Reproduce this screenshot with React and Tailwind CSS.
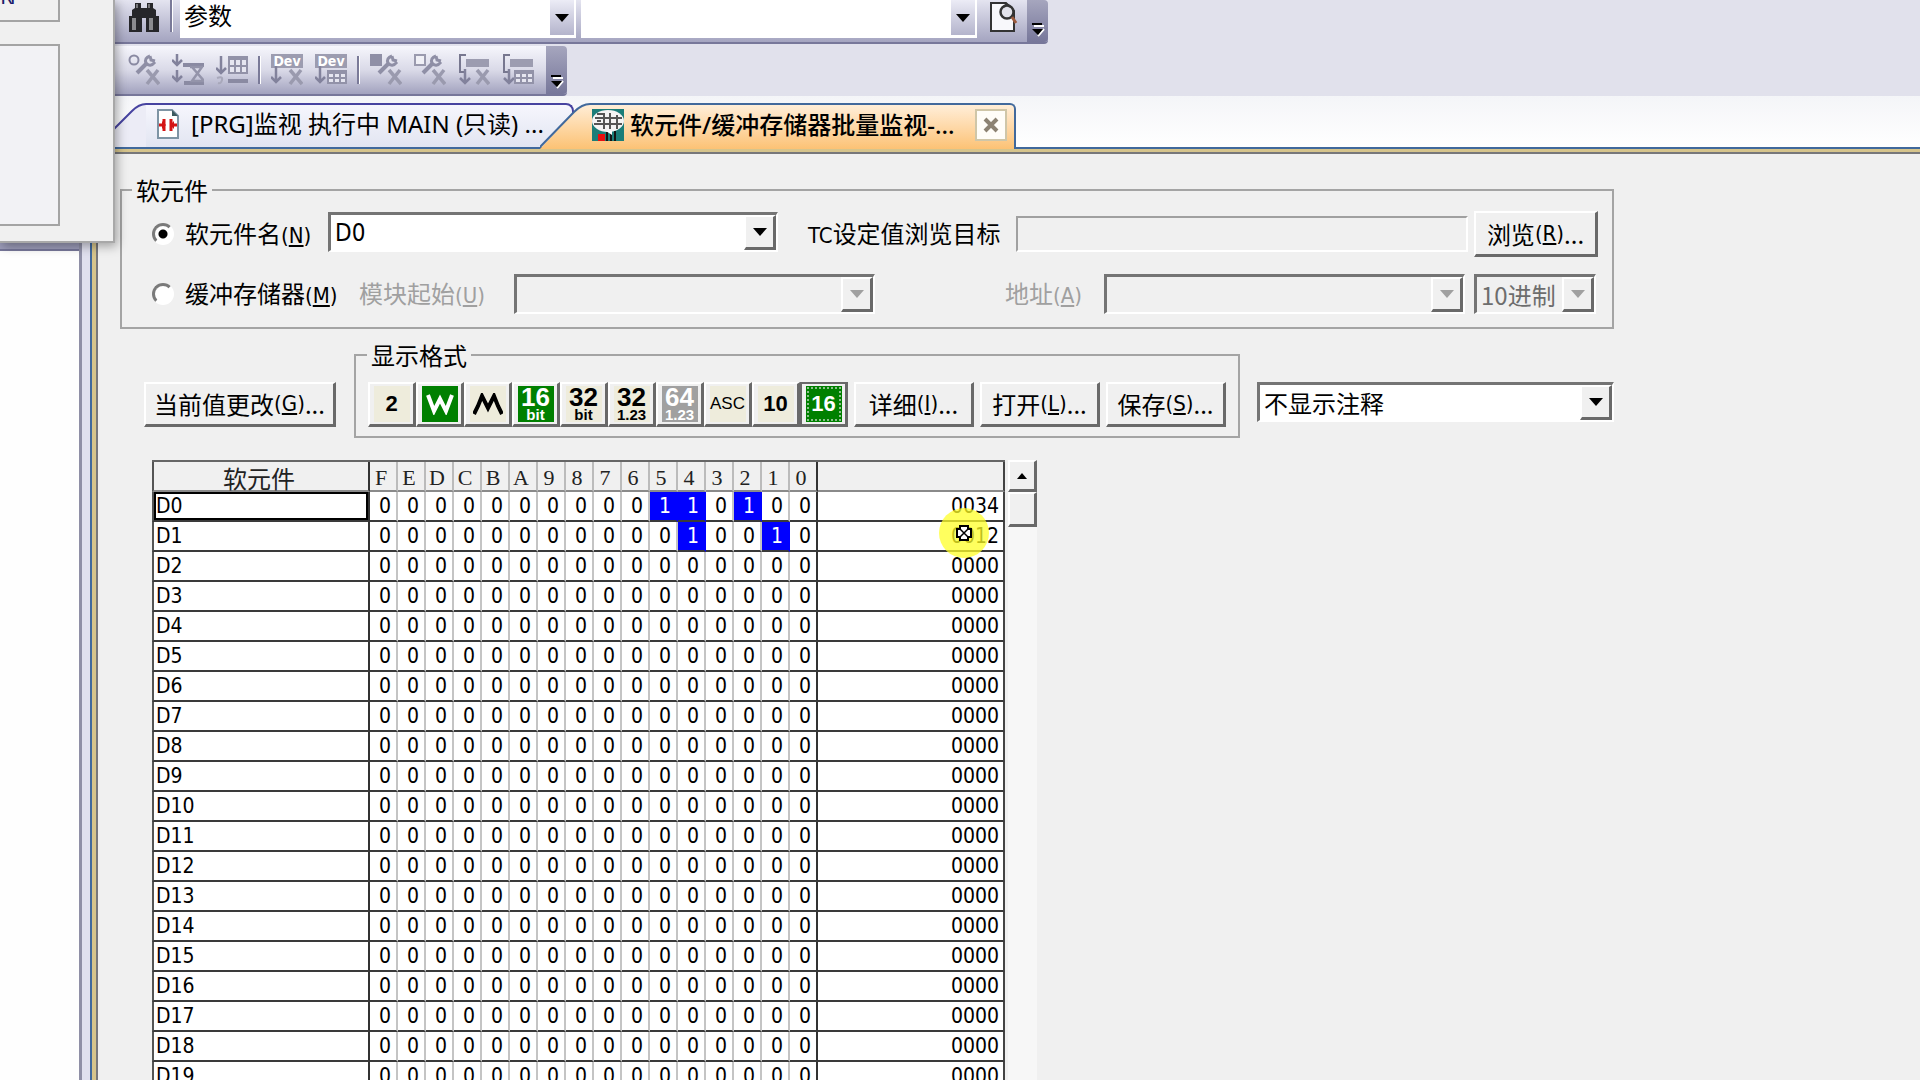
import { useState } from 'react';
import { clsx } from 'clsx';

const BITS = ['F', 'E', 'D', 'C', 'B', 'A', '9', '8', '7', '6', '5', '4', '3', '2', '1', '0'];

// register values, everything not listed is 0
const VALUES = { 0: 0x34, 1: 0x12 };

const ROWS = Array.from({ length: 20 }, (_, i) => {
     const value = VALUES[i] ?? 0;
     return {
          name: `D${i}`,
          bits: value.toString(2).padStart(16, '0').split(''),
          hex: value.toString(16).toUpperCase().padStart(4, '0'),
     };
});

const RAISED = "border-t-2 border-l-2 border-r-3 border-b-3 border-t-white border-l-white border-r-[#696969] border-b-[#696969] bg-[#f0f0f0]";

// Latin part with the underlined access key
function Key({ k }) {
     return <span className="font-['DejaVu_Sans_Condensed','DejaVu_Sans',sans-serif] text-[22px]">(<u className="underline-offset-2">{k}</u>)</span>;
}

function PushButton({ children, className }) {
     return (
          <button type="button" className={clsx("flex items-center justify-center whitespace-nowrap text-[24px] leading-6", RAISED, className)}>
               {children}
          </button>
     );
}

function Combo({ id, label, options, disabled, className }) {
     return (
          <div className={clsx("flex h-10 border-t-3 border-l-3 border-r-2 border-b-2 border-t-[#747474] border-l-[#747474] border-r-white border-b-white", disabled ? "bg-[#f0f0f0]" : "bg-white", className)}>
               <select id={id} aria-label={label} disabled={disabled} className={clsx("min-w-0 flex-1 appearance-none bg-transparent pl-1 text-[24px] leading-8 outline-none", disabled ? "text-[#6d6d6d] opacity-100" : "text-black")}>
                    {options.map((o) => <option key={o}>{o}</option>)}
               </select>
               <div className={clsx("pointer-events-none flex w-8 shrink-0 items-center justify-center", RAISED)}>
                    <svg viewBox="0 0 14 8" className={clsx("h-2 w-[14px]", disabled ? "fill-[#a0a0a0]" : "fill-black")}><path d="M0 0h14L7 8z" /></svg>
               </div>
          </div>
     );
}

function Radio({ id, checked, onChange, children, className }) {
     return (
          <div className={clsx("flex shrink-0 items-center gap-[11px]", className)}>
               <input
                    id={id}
                    type="radio"
                    name="target"
                    checked={checked}
                    onChange={onChange}
                    className="h-[22px] w-[22px] shrink-0 appearance-none rounded-full border-3 border-t-[#7a7a7a] border-l-[#7a7a7a] border-r-white border-b-white bg-white checked:bg-[radial-gradient(circle,#000_4px,#fff_5px)]"
               />
               <label htmlFor={id} className="whitespace-nowrap text-[24px] leading-6">{children}</label>
          </div>
     );
}

/* ---------- toolbar icons ---------- */

function Wrench({ x = 0 }) {
     return (
          <g transform={`translate(${x} 0)`}>
               <path d="M9 19 L19 9" stroke="#8f8fa6" strokeWidth="4" />
               <path d="M22 2 q-6 2 -4 7 q4 5 9 -1 M22 2 l1 4 l4 1" stroke="#8f8fa6" strokeWidth="3" fill="none" />
          </g>
     );
}

const Cross = () => <path d="M19 16 L31 30 M30 16 L19 30" stroke="#9a9aae" strokeWidth="3.5" />;
const Grid = ({ x, y, w, h }) => (
     <g>
          <rect x={x} y={y} width={w} height={h} fill="#9292a8" />
          {[0, 1, 2].map((c) => [0, 1].map((r) => (
               <rect key={`${c}${r}`} x={x + 2 + (c * (w - 2)) / 3} y={y + 4 + (r * (h - 4)) / 2} width={(w - 2) / 3 - 2} height={(h - 4) / 2 - 2} fill="#e6e6f0" />
          )))}
     </g>
);
const Down = ({ x, y, h }) => <path d={`M${x} ${y}v${h} M${x - 5} ${y + h - 5}l5 5l5 -5`} stroke="#82829c" strokeWidth="2.5" fill="none" />;

const ICONS = {
     circleX: <><circle cx="6" cy="6" r="4.5" fill="none" stroke="#8a8aa2" strokeWidth="2" /><Wrench /><Cross /></>,
     delay: <><Down x={5} y={0} h={11} /><Down x={5} y={16} h={11} /><path d="M11 11h21M12 29h20" stroke="#8a8aa2" strokeWidth="4" /><path d="M18 13h12l-10 14h12l-12-14" fill="none" stroke="#9494aa" strokeWidth="2.5" /></>,
     list: <><Down x={5} y={2} h={17} /><Grid x={12} y={2} w={20} h={18} /><path d="M12 27h20" stroke="#8a8aa2" strokeWidth="4" /><path d="M1 24q6 -2 5 2t-4 3" fill="none" stroke="#a8a8ba" strokeWidth="2" /></>,
     squareX: <><rect width="12" height="12" fill="#8f8fa6" /><Wrench /><Cross /></>,
     boxX: <><rect x="1" y="1" width="10" height="10" fill="#f0f0f6" stroke="#9a9aae" strokeWidth="2" /><Wrench /><Cross /></>,
     jumpX: <><path d="M8 1H2v17h5" fill="none" stroke="#77778f" strokeWidth="2" /><Down x={7} y={15} h={14} /><rect x="8" y="5" width="23" height="8" fill="#9c9cb0" /><Cross /></>,
     jumpGrid: <><path d="M8 1H2v17h5" fill="none" stroke="#77778f" strokeWidth="2" /><Down x={7} y={15} h={14} /><rect x="8" y="5" width="23" height="8" fill="#9c9cb0" /><Grid x={12} y={16} w={20} h={14} /></>,
     devX: <><DevLabel /><Down x={5} y={12} h={16} /><Cross /></>,
     devGrid: <><DevLabel /><Down x={5} y={12} h={16} /><Grid x={12} y={16} w={20} h={14} /></>,
};

function DevLabel() {
     return (
          <g>
               <rect width="32" height="14" fill="#9c9cb0" />
               <text x="16" y="12" textAnchor="middle" fontSize="14" fontWeight="bold" fill="#fff" fontFamily="DejaVu Sans Condensed, DejaVu Sans, sans-serif">Dev</text>
          </g>
     );
}

function ToolIcon({ name, label }) {
     return (
          <button type="button" aria-label={label} className="h-8 w-8 shrink-0">
               <svg viewBox="0 0 32 32" className="h-8 w-8">{ICONS[name]}</svg>
          </button>
     );
}

const Divider = () => <div className="mx-[10px] h-7 w-[3px] shrink-0 border-r border-r-white bg-[#7a7a98]" />;

function EndCap() {
     return (
          <div className="flex h-full w-[21px] shrink-0 items-end justify-center rounded-r bg-linear-to-b from-[#a6a6be] to-[#77779a] pb-1">
               <svg viewBox="0 0 14 16" className="h-4 w-[14px]"><path d="M3 4h10M7 14l6-7" stroke="#fff" strokeWidth="2" /><path d="M1 1h10v2H1zM1 7h11l-5 6z" /></svg>
          </div>
     );
}

function ToolCombo({ label, options, className }) {
     return (
          <div className={clsx("flex h-[38px] shrink-0 bg-white", className)}>
               <select aria-label={label} className="min-w-0 flex-1 appearance-none bg-transparent pb-2 pl-1 text-[24px] leading-7 outline-none">
                    {options.map((o) => <option key={o}>{o}</option>)}
               </select>
               <div className="pointer-events-none mr-[2px] flex h-[35px] w-6 items-center justify-center bg-linear-to-b from-[#ececf6] to-[#b4b4cc]">
                    <svg viewBox="0 0 14 8" className="h-2 w-[14px]"><path d="M0 0h14L7 8z" /></svg>
               </div>
          </div>
     );
}

function Toolbars() {
     return (
          <div className="h-24 shrink-0 bg-[#e1e1ec]">
               <div className="flex h-11 w-[1048px] items-start rounded-br border-b-2 border-[#77779a] bg-linear-to-b from-[#e4e4f0] to-[#a4a4c0]">
                    <div className="w-[115px] shrink-0" />
                    <button type="button" aria-label="查找" className="mt-px ml-[13px] h-8 w-8 shrink-0">
                         <svg viewBox="0 0 32 32" className="h-8 w-8">
                              <path d="M7 2h6v5h6V2h6v5l3 2v6h3v16H18V17h-4v14H1V15h3V9l3-2z" fill="#26262a" />
                              <path d="M4 17h4v12H4zM21 17h4v12h-4z" fill="#8b8b8f" />
                              <path d="M8 3h2v4H8zM20 3h2v4h-2z" fill="#77777b" />
                         </svg>
                    </button>
                    <div className="ml-[10px] h-8 w-[3px] shrink-0 border-r border-r-white bg-[#7a7a98]" />
                    <ToolCombo label="查找对象" options={['参数']} className="ml-[7px] w-[396px]" />
                    <ToolCombo label="查找字符串" options={['']} className="ml-[5px] w-[396px]" />
                    <button type="button" aria-label="查找预览" className="ml-3 h-8 w-8 shrink-0">
                         <svg viewBox="0 0 32 32" className="h-8 w-8">
                              <path d="M2 3h15l8 8v20H2z" fill="#f8f8fb" stroke="#333" strokeWidth="2" />
                              <circle cx="18" cy="12" r="6.5" fill="#e2e2ea" stroke="#333" strokeWidth="2.5" />
                              <path d="M15 7q3-5 6 0" fill="none" stroke="#333" strokeWidth="2" />
                              <path d="M23 17l4 6" stroke="#9c5a3c" strokeWidth="3" />
                         </svg>
                    </button>
                    <div className="ml-auto h-[42px]"><EndCap /></div>
               </div>
               <div className="mt-[2px] flex h-[50px] w-[567px] items-center rounded-r border-b-2 border-[#77779a] bg-linear-to-b from-[#f6f6fc] via-[#dadae8] to-[#a2a2be]">
                    <div className="ml-32 flex items-center gap-3">
                         <ToolIcon name="circleX" label="软元件测试" />
                         <ToolIcon name="delay" label="扫描延时" />
                         <ToolIcon name="list" label="列表" />
                    </div>
                    <Divider />
                    <div className="flex items-center gap-3">
                         <ToolIcon name="devX" label="取消软元件" />
                         <ToolIcon name="devGrid" label="软元件列表" />
                    </div>
                    <Divider />
                    <div className="mr-auto flex items-center gap-3">
                         <ToolIcon name="squareX" label="停止执行" />
                         <ToolIcon name="boxX" label="解除停止" />
                         <ToolIcon name="jumpX" label="取消跳转" />
                         <ToolIcon name="jumpGrid" label="跳转列表" />
                    </div>
                    <EndCap />
               </div>
          </div>
     );
}

function TabStrip() {
     return (
          <div className="flex h-[53px] items-end border-b-2 border-[#41699c] bg-linear-to-b from-[#f4f5f8] to-white font-['Noto_Sans','Noto_Sans_CJK_SC',sans-serif]">
               <svg viewBox="0 0 50 44" className="ml-[6px] h-11 w-[50px] shrink-0"><path d="M0 44L36 8Q44 1 50 1V44z" fill="#ececf6" /><path d="M0 44L36 8Q43 1 50 1" fill="none" stroke="#4743a0" strokeWidth="2" /></svg>
               <button type="button" className="flex h-11 w-[428px] shrink-0 items-center gap-3 rounded-tr-lg border-t-2 border-r-2 border-[#4743a0] bg-linear-to-b from-[#f6f6fd] to-[#e2e5f1] pb-1 pl-[11px] text-[24px] leading-8 whitespace-nowrap">
                    <svg viewBox="0 0 22 30" className="h-[30px] w-[22px] shrink-0">
                         <path d="M1 1h14l6 6v22H1z" fill="#fff" stroke="#7e94a4" strokeWidth="2" />
                         <path d="M15 1v6h6" fill="#3c5a60" />
                         <path d="M2 16h4M16 16h4M7 10v12M14 10v12" stroke="#d41414" strokeWidth="3" />
                         <path d="M5 12l4 4-4 4zM17 12l-4 4 4 4z" fill="#d41414" />
                    </svg>
                    [PRG]监视 执行中 MAIN (只读) ...
               </button>
               <svg viewBox="0 0 50 46" className="relative -mb-[2px] -ml-[34px] h-[46px] w-[50px] shrink-0"><path d="M0 46L34 9Q43 1 50 1V46z" fill="url(#tabfill)" /><path d="M0 44L34 9Q42 1 50 1" fill="none" stroke="#41699c" strokeWidth="2" /><defs><linearGradient id="tabfill" x2="0" y2="1"><stop stopColor="#ffeed8" /><stop offset="1" stopColor="#fcc274" /></linearGradient></defs></svg>
               <div className="-mb-[2px] flex h-[46px] w-[426px] shrink-0 items-center rounded-tr-md border-t-2 border-r-2 border-[#41699c] bg-linear-to-b from-[#ffeed8] to-[#fcc274] pb-1 pl-[2px]">
                    <button type="button" className="flex items-center gap-[6px] text-[24px] leading-8 font-medium whitespace-nowrap">
                         <svg viewBox="0 0 32 32" className="h-8 w-8">
                              <path d="M0 0h32v32H0z" fill="#1b7d78" />
                              <ellipse cx="16" cy="12" rx="16" ry="11" fill="#f4f4f4" />
                              <path d="M3 9h27M2 15h28M12 5v15M18 4v16M25 6v14M5 5h8M5 12h4" stroke="#555" strokeWidth="2" />
                              <path d="M6 25h7v7H6z" fill="#e81010" />
                              <path d="M15 23v9M19 22v10M23 22v10" stroke="#151515" strokeWidth="2" />
                              <path d="M14 22l6 4v-4z" fill="#fff" />
                         </svg>
                         软元件/缓冲存储器批量监视-...
                    </button>
                    <button type="button" aria-label="关闭" className="mr-[7px] ml-auto flex h-8 w-8 items-center justify-center border-2 border-[#cfc6a8] bg-[#fffdf8]">
                         <svg viewBox="0 0 16 16" className="h-4 w-4"><path d="M2 2l12 12M14 2L2 14" stroke="#8c8272" strokeWidth="4" /></svg>
                    </button>
               </div>
          </div>
     );
}

/* ---------- display format buttons ---------- */

const W = <svg viewBox="0 0 28 22" className="h-[22px] w-7"><path d="M2 2l6 16 6-12 6 12 6-16" fill="none" stroke="#fff" strokeWidth="4" /></svg>;
const M = <svg viewBox="0 0 30 22" className="h-[22px] w-[30px]"><path d="M1 21l4-8 4-10 6 12 6-12 4 10 4 8" fill="none" stroke="#000" strokeWidth="4" /></svg>;

const FORMATS = [
     { id: '2', label: '2进制', big: '2' },
     { id: 'w', label: '字', icon: W, green: true },
     { id: 'm', label: '多点字', icon: M },
     { id: '16b', label: '16位整数', big: '16', small: 'bit', green: true },
     { id: '32b', label: '32位整数', big: '32', small: 'bit' },
     { id: '32f', label: '32位实数', big: '32', small: '1.23' },
     { id: '64f', label: '64位实数', big: '64', small: '1.23', disabled: true },
     { id: 'asc', label: 'ASCII', big: 'ASC', narrow: true },
     { id: '10', label: '10进制', big: '10' },
     { id: '16', label: '16进制', big: '16', green: true, pressed: true },
];

function FormatButton({ f }) {
     return (
          <button
               type="button"
               aria-label={f.label}
               disabled={f.disabled}
               className={clsx("flex h-[45px] w-12 shrink-0 items-center justify-center", RAISED, f.pressed && "outline-2 -outline-offset-2 outline-[#696969]")}
          >
               <span
                    className={clsx(
                         "flex h-9 w-9 flex-col items-center justify-center font-['Liberation_Sans',sans-serif] font-bold",
                         f.disabled ? "bg-[#a0a0a0] text-white" : f.green ? "bg-[#008000] text-white" : "bg-[#eeecdc] text-black",
                         f.pressed && "outline-2 -outline-offset-3 outline-dotted outline-[#8cc08c]"
                    )}
               >
                    {f.icon}
                    {f.big && <span className={clsx(f.narrow ? "text-[17px] leading-6 font-normal" : f.small ? "text-[26px] leading-[22px]" : "text-[22px] leading-6")}>{f.big}</span>}
                    {f.small && <span className="text-[15px] leading-[14px]">{f.small}</span>}
               </span>
          </button>
     );
}

function DeviceTable() {
     return (
          <table className="w-[853px] table-fixed border-separate border-spacing-0 border-t-2 border-[#666] bg-white font-['DejaVu_Sans_Condensed','DejaVu_Sans',sans-serif] text-[21px] leading-6">
               <colgroup>
                    <col className="w-[218px]" />
                    {BITS.map((b) => <col key={b} className="w-7" />)}
                    <col />
               </colgroup>
               <thead>
                    <tr className="h-[30px] bg-[#f0f0f0] text-[#222]">
                         <th scope="col" className="border-r-2 border-b-2 border-l-2 border-r-[#333] border-b-[#8a8a8a] border-l-[#555] p-0 pt-1 pr-1 font-['Noto_Sans_CJK_SC',sans-serif] text-[24px] font-normal">软元件</th>
                         {BITS.map((b, i) => (
                              <th key={b} scope="col" className={clsx("border-r-2 border-b-2 border-b-[#8a8a8a] p-0 pt-1 pr-1 text-center font-['Liberation_Serif',serif] text-[22px] font-normal", i === 15 ? "border-r-[#333]" : "border-r-[#bbb]")}>{b}</th>
                         ))}
                         <th aria-label="值" className="border-r-2 border-b-2 border-r-[#444] border-b-[#8a8a8a] p-0" />
                    </tr>
               </thead>
               <tbody>
                    {ROWS.map((row, r) => (
                         <tr key={row.name} className="h-[30px]">
                              <th scope="row" className="border-r-2 border-b-2 border-l-2 border-r-[#333] border-b-[#3a3a3a] border-l-[#555] p-0 text-left font-normal">
                                   <div className={clsx("flex h-7 items-center", r === 0 ? "border-2 border-black" : "pl-[2px]")}>{row.name}</div>
                              </th>
                              {row.bits.map((bit, i) => (
                                   <td
                                        key={i}
                                        className={clsx(
                                             "border-r-2 border-b-2 border-b-[#3a3a3a] p-0 pl-1 text-center",
                                             bit === '1' ? "border-r-[#0000ff] bg-[#0000ff] text-white" : i === 15 ? "border-r-[#333]" : "border-r-[#c4c4c4]"
                                        )}
                                   >
                                        {bit}
                                   </td>
                              ))}
                              <td className="border-r-2 border-b-2 border-r-[#444] border-b-[#3a3a3a] p-0 pr-1 text-right">
                                   {r === 1 ? <span className="relative">{row.hex}<Pointer /></span> : row.hex}
                              </td>
                         </tr>
                    ))}
               </tbody>
          </table>
     );
}

// highlighted cell cursor
function Pointer() {
     return (
          <svg viewBox="0 0 50 50" className="absolute -top-4 -left-3 h-[50px] w-[50px]">
               <circle cx="25" cy="25" r="25" fill="#ffff28" fillOpacity="0.75" />
               <path d="M21 18h8v3h3v8h-3v3h-8v-3h-3v-8h3z" fill="#fff" stroke="#000" strokeWidth="2" />
               <path d="M21 21l8 8M29 21l-8 8" stroke="#000" strokeWidth="1.5" />
          </svg>
     );
}

function ScrollBar() {
     return (
          <div className="ml-[3px] flex w-[29px] flex-col bg-[#f7f7f7]">
               <button type="button" aria-label="向上滚动" className={clsx("flex h-8 items-center justify-center", RAISED)}>
                    <svg viewBox="0 0 10 6" className="h-[6px] w-[10px]"><path d="M0 6h10L5 0z" /></svg>
               </button>
               <div className={clsx("h-[35px]", RAISED)} />
          </div>
     );
}

function MonitorPanel() {
     const [target, setTarget] = useState('device');

     return (
          <main className="flex-1 pt-6 pr-[306px] pl-[22px]">
               <fieldset className="border-2 border-[#a4a4a4] pb-[13px]">
                    <legend className="ml-[10px] px-1 text-[24px] leading-6">软元件</legend>
                    <div className="mt-[9px] flex h-[46px] items-center pr-[14px] pl-[30px]">
                         <Radio id="device" checked={target === 'device'} onChange={() => setTarget('device')} className="w-44">软元件名<Key k="N" /></Radio>
                         <Combo label="软元件名" options={['D0']} className="mb-1 w-[450px] font-['DejaVu_Sans_Condensed','DejaVu_Sans',sans-serif]" />
                         <label htmlFor="tc" className="ml-[30px] w-[208px] shrink-0 whitespace-nowrap text-[24px] leading-6"><span className="font-['DejaVu_Sans_Condensed','DejaVu_Sans',sans-serif] text-[22px]">TC</span>设定值浏览目标</label>
                         <input id="tc" readOnly className="h-9 min-w-0 flex-1 border-2 border-t-[#a0a0a0] border-r-white border-b-white border-l-[#a0a0a0] bg-[#f0f0f0] px-1 text-[24px] outline-none" />
                         <PushButton className="ml-[6px] h-[46px] w-[124px] shrink-0">浏览<Key k="R" />...</PushButton>
                    </div>
                    <div className="mt-[17px] flex items-center pr-[14px] pl-[30px]">
                         <Radio id="buffer" checked={target === 'buffer'} onChange={() => setTarget('buffer')} className="w-[207px]">缓冲存储器<Key k="M" /></Radio>
                         <label htmlFor="module" className="w-[155px] text-[24px] leading-6 text-[#a0a0a0]">模块起始<Key k="U" /></label>
                         <Combo id="module" disabled options={['']} className="w-[361px]" />
                         <label htmlFor="address" className="ml-auto w-[99px] text-[24px] leading-6 text-[#a0a0a0]">地址<Key k="A" /></label>
                         <Combo id="address" disabled options={['']} className="w-[361px]" />
                         <Combo label="进制" disabled options={['10进制']} className="mr-[2px] ml-[9px] w-[122px]" />
                    </div>
               </fieldset>

               <div className="mt-[14px] flex items-end">
                    <PushButton className="mb-[11px] ml-6 h-[45px] w-48 shrink-0">当前值更改<Key k="G" />...</PushButton>
                    <fieldset className="ml-[18px] border-2 border-[#a4a4a4] pb-[9px]">
                         <legend className="ml-[11px] px-1 text-[24px] leading-6">显示格式</legend>
                         <div className="mt-[15px] flex px-3">
                              {FORMATS.map((f) => <FormatButton key={f.id} f={f} />)}
                              <div className="ml-[6px] flex gap-[6px]">
                                   <PushButton className="h-[45px] w-[120px]">详细<Key k="I" />...</PushButton>
                                   <PushButton className="h-[45px] w-[120px]">打开<Key k="L" />...</PushButton>
                                   <PushButton className="h-[45px] w-[120px]">保存<Key k="S" />...</PushButton>
                              </div>
                         </div>
                    </fieldset>
                    <Combo label="注释显示" options={['不显示注释']} className="mb-4 ml-[17px] flex-1" />
               </div>

               <div className="mt-[22px] ml-8 flex">
                    <DeviceTable />
                    <ScrollBar />
               </div>
          </main>
     );
}

function FloatingWindow() {
     return (
          <section aria-label="对话框" className="absolute top-0 left-0 h-[243px] w-[115px] border-r-2 border-b-2 border-[#a8a8a8] bg-[#f0f0f0] shadow-[2px_3px_10px_rgba(0,0,0,0.35)]">
               <div className="h-[22px] w-[60px] border-r-2 border-b-2 border-[#a4a4a4]">
                    <div className="flex h-1 items-end overflow-hidden text-[22px] leading-4 text-[#1a1a6a]">N</div>
               </div>
               <div className="mt-[22px] h-[182px] w-[60px] border-t-2 border-r-2 border-b-2 border-[#a4a4a4] bg-[#f2f2f5]" />
          </section>
     );
}

export default function App() {
     return (
          <div className="relative flex h-screen flex-col overflow-hidden bg-[#f0f0f0] font-['Noto_Sans_CJK_SC',sans-serif] text-black">
               <Toolbars />
               <div className="flex min-h-0 flex-1">
                    <aside className="flex w-[82px] shrink-0 flex-col border-r-3 border-[#8f8fa6] bg-[#dcdcec]">
                         <div className="h-[155px] border-b-2 border-[#77779a] bg-[#9d9dba]" />
                         <div className="flex-1 bg-[#fefefe]" />
                    </aside>
                    <div className="w-2 shrink-0 bg-[#e0e0ee]" />
                    <div className="flex min-w-0 flex-1 flex-col">
                         <TabStrip />
                         <div className="flex min-h-0 flex-1 border-l-2 border-[#41699c]">
                              <div className="flex min-w-0 flex-1 border-t-3 border-l-4 border-[#d6c48c]">
                                   <div className="flex min-w-0 flex-1 border-t-2 border-l-2 border-[#77777a]">
                                        <MonitorPanel />
                                   </div>
                              </div>
                         </div>
                    </div>
               </div>
               <FloatingWindow />
          </div>
     );
}
